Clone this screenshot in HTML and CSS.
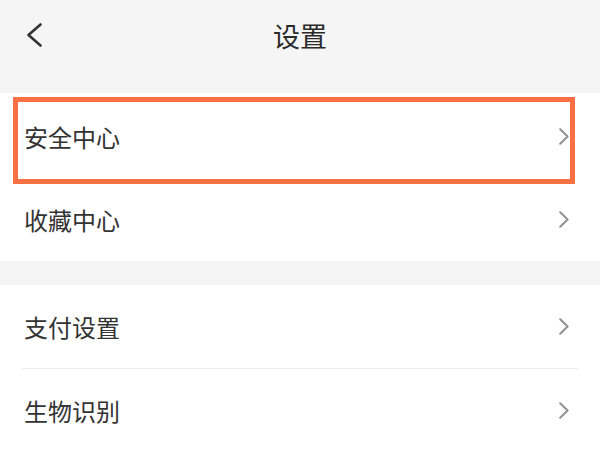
FILE: index.html
```html
<!DOCTYPE html>
<html lang="zh-CN">
<head>
<meta charset="utf-8">
<title>设置</title>
<link rel="stylesheet" href="styles.css">
</head>
<body>
<div class="page">
  <header class="topbar">
    <span class="back">
      <svg width="16" height="24" viewBox="0 0 16 24"><polyline points="14.5,1.5 2.5,12 14.5,22.5" fill="none" stroke="#333" stroke-width="2.6" stroke-linecap="round" stroke-linejoin="round"/></svg>
    </span>
    <h1 class="title">设置</h1>
  </header>
  <div class="gap-top"></div>
  <section class="group first">
    <div class="row highlighted">
      <span class="label">安全中心</span>
      <svg class="chev" width="10" height="17" viewBox="0 0 10 17"><polyline points="1.2,1.2 8.6,8.5 1.2,15.8" fill="none" stroke="#919191" stroke-width="2" stroke-linecap="round" stroke-linejoin="round"/></svg>
      <span class="mark"></span>
    </div>
    <div class="row">
      <span class="label">收藏中心</span>
      <svg class="chev" width="10" height="17" viewBox="0 0 10 17"><polyline points="1.2,1.2 8.6,8.5 1.2,15.8" fill="none" stroke="#919191" stroke-width="2" stroke-linecap="round" stroke-linejoin="round"/></svg>
    </div>
  </section>
  <div class="band"></div>
  <section class="group">
    <div class="row">
      <span class="label">支付设置</span>
      <svg class="chev" width="10" height="17" viewBox="0 0 10 17"><polyline points="1.2,1.2 8.6,8.5 1.2,15.8" fill="none" stroke="#919191" stroke-width="2" stroke-linecap="round" stroke-linejoin="round"/></svg>
    </div>
    <div class="divider"></div>
    <div class="row">
      <span class="label">生物识别</span>
      <svg class="chev" width="10" height="17" viewBox="0 0 10 17"><polyline points="1.2,1.2 8.6,8.5 1.2,15.8" fill="none" stroke="#919191" stroke-width="2" stroke-linecap="round" stroke-linejoin="round"/></svg>
    </div>
    <div class="divider"></div>
  </section>
</div>
</body>
</html>
```

FILE: styles.css
```css
html, body {
  margin: 0;
  padding: 0;
  background: #ffffff;
  font-family: "Noto Sans CJK SC", "Noto Sans", sans-serif;
  color: #333333;
}

.page {
  width: 600px;
  height: 450px;
  overflow: hidden;
}

.topbar {
  height: 70px;
  background: #f5f5f5;
  display: flex;
  align-items: center;
  justify-content: center;
  position: relative;
}

.back {
  position: absolute;
  left: 26px;
  top: 23px;
  width: 16px;
  height: 24px;
  display: flex;
}

.title {
  margin: 0;
  font-size: 27px;
  font-weight: 400;
  color: #2b2b2b;
  line-height: 1;
}

.gap-top {
  height: 23px;
  background: #f5f5f5;
}

.group {
  background: #ffffff;
}

.group.first {
  padding-top: 2px;
}

.row {
  height: 83px;
  display: flex;
  align-items: center;
  justify-content: space-between;
  padding: 0 31px 0 24px;
  position: relative;
}

.label {
  font-size: 24px;
  line-height: 1;
  color: #333333;
}

.chev {
  display: block;
}

.mark {
  position: absolute;
  left: 13px;
  top: 2px;
  width: 562px;
  height: 87px;
  box-sizing: border-box;
  border: 5px solid #f87044;
  pointer-events: none;
}

.band {
  height: 24px;
  background: #f5f5f5;
}

.divider {
  height: 1px;
  background: #ececec;
  margin: 0 22px;
}
```
